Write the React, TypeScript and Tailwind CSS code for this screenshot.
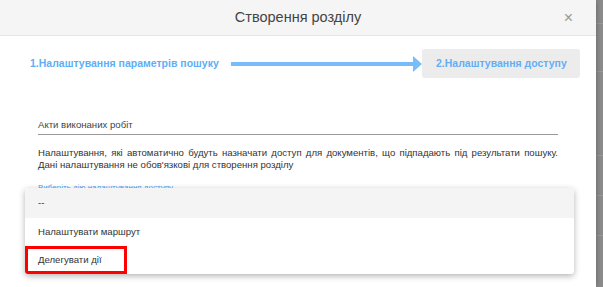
const options = ["--", "Налаштувати маршрут", "Делегувати дії"];

export default function App() {
  return (
    <div className="flex h-[287px] w-[603px] overflow-hidden bg-white font-['Liberation_Sans',Arial,sans-serif]">
      {/* modal */}
      <div className="relative flex w-[596px] flex-col bg-white shadow-[0_0_6px_rgba(0,0,0,0.3)]">
        <div className="relative flex h-[36px] shrink-0 items-center justify-center border-b border-[#e6e6e6] bg-[#f5f5f5]">
          <span className="text-[14.5px] text-[#444]">Створення розділу</span>
          <span className="absolute right-[23px] top-[10px] text-[16px] leading-none text-[#999]">×</span>
        </div>

        <div className="relative flex-1">
          {/* steps */}
          <div className="mt-[13px] flex h-[29px] items-center pl-[30px] pr-[16px]">
            <span className="text-[10.5px] font-bold text-[#5eaef7]">1.Налаштування параметрів пошуку</span>
            <div className="ml-[12px] h-[4px] flex-1 bg-[#78bdf9]" />
            <div className="h-0 w-0 border-y-[8px] border-l-[9px] border-y-transparent border-l-[#78bdf9]" />
            <div className="flex h-[29px] w-[158px] items-center rounded-[3px] bg-[#ececec] pl-[14px] text-[10.5px] font-bold text-[#64aef5]">
              2.Налаштування доступу
            </div>
          </div>

          <div className="px-[38px]">
            <div className="mt-[40px] border-b border-[#999] pb-[3px] text-[9.6px] leading-[13px] text-[#444]">
              Акти виконаних робіт
            </div>
            <p className="mt-[12px] text-justify text-[9.6px] leading-[12px] text-[#333]">
              Налаштування, які автоматично будуть назначати доступ для документів, що підпадають під результати пошуку. Дані налаштування не обов'язкові для створення розділу
            </p>
            <div className="mt-[12px] text-[8px] leading-[10px] text-[#4aa3f0]">Виберіть дію налаштування доступу</div>
          </div>

          {/* open select menu */}
          <ul className="absolute left-[25px] top-[152px] w-[549px] overflow-hidden rounded-[3px] bg-white shadow-[0_2px_6px_rgba(0,0,0,0.3)]">
            {options.map((o, i) => (
              <li
                key={o}
                className={
                  i === 0
                    ? "flex h-[30px] items-center bg-[#f4f4f4] pl-[13px] text-[9.6px] text-[#333]"
                    : "relative flex h-[28px] items-center pl-[13px] text-[9.6px] text-[#333]"
                }
              >
                {o}
                {i === 2 && <span className="absolute left-0 top-0 h-[28px] w-[102px] border-[3px] border-[#ff0000]" />}
              </li>
            ))}
          </ul>
        </div>
      </div>

      {/* page behind overlay */}
      <div className="flex w-[7px] flex-col bg-[#8c8c8c]">
        <div className="h-[24px] border-b border-[#9a9a9a]" />
        <div className="h-[48px] border-b border-[#9a9a9a]" />
        <div className="h-[84px] border-b border-[#9a9a9a]" />
        <div className="h-[40px] border-b border-[#9a9a9a]" />
        <div className="h-[40px] border-b border-[#9a9a9a]" />
      </div>
    </div>
  );
}
